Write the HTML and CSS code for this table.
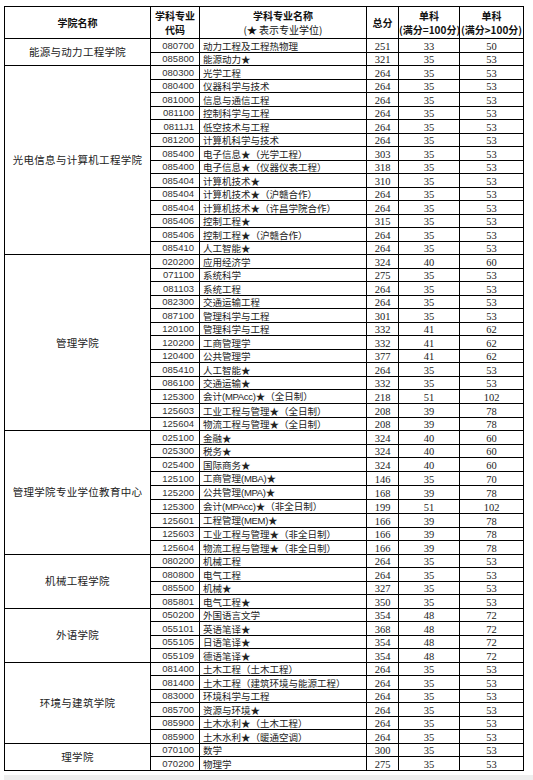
FILE: index.html
```html
<!DOCTYPE html>
<html lang="zh-CN">
<head>
<meta charset="utf-8">
<title>复试分数线</title>
<link rel="stylesheet" href="styles.css">
</head>
<body>
<table class="score-table">
  <colgroup>
    <col class="c-college">
    <col class="c-code">
    <col class="c-name">
    <col class="c-total">
    <col class="c-s1">
    <col class="c-s2">
  </colgroup>
  <thead>
    <tr>
      <th>学院名称</th>
      <th>学科专业<br>代码</th>
      <th>学科专业名称<br><span class="hint">(★ 表示专业学位)</span></th>
      <th>总分</th>
      <th>单科<br>(满分=100分)</th>
      <th>单科<br>(满分&gt;100分)</th>
    </tr>
  </thead>
  <tbody>
    <tr><td class="college" rowspan="2">能源与动力工程学院</td><td class="code">080700</td><td class="name">动力工程及工程热物理</td><td class="num">251</td><td class="num">33</td><td class="num">50</td></tr>
    <tr><td class="code">085800</td><td class="name">能源动力★</td><td class="num">321</td><td class="num">35</td><td class="num">53</td></tr>

    <tr><td class="college" rowspan="14">光电信息与计算机工程学院</td><td class="code">080300</td><td class="name">光学工程</td><td class="num">264</td><td class="num">35</td><td class="num">53</td></tr>
    <tr><td class="code">080400</td><td class="name">仪器科学与技术</td><td class="num">264</td><td class="num">35</td><td class="num">53</td></tr>
    <tr><td class="code">081000</td><td class="name">信息与通信工程</td><td class="num">264</td><td class="num">35</td><td class="num">53</td></tr>
    <tr><td class="code">081100</td><td class="name">控制科学与工程</td><td class="num">264</td><td class="num">35</td><td class="num">53</td></tr>
    <tr><td class="code">0811J1</td><td class="name">低空技术与工程</td><td class="num">264</td><td class="num">35</td><td class="num">53</td></tr>
    <tr><td class="code">081200</td><td class="name">计算机科学与技术</td><td class="num">264</td><td class="num">35</td><td class="num">53</td></tr>
    <tr><td class="code">085400</td><td class="name">电子信息★（光学工程）</td><td class="num">303</td><td class="num">35</td><td class="num">53</td></tr>
    <tr><td class="code">085400</td><td class="name">电子信息★（仪器仪表工程）</td><td class="num">318</td><td class="num">35</td><td class="num">53</td></tr>
    <tr><td class="code">085404</td><td class="name">计算机技术★</td><td class="num">310</td><td class="num">35</td><td class="num">53</td></tr>
    <tr><td class="code">085404</td><td class="name">计算机技术★（沪赣合作）</td><td class="num">264</td><td class="num">35</td><td class="num">53</td></tr>
    <tr><td class="code">085404</td><td class="name">计算机技术★（许昌学院合作）</td><td class="num">264</td><td class="num">35</td><td class="num">53</td></tr>
    <tr><td class="code">085406</td><td class="name">控制工程★</td><td class="num">315</td><td class="num">35</td><td class="num">53</td></tr>
    <tr><td class="code">085406</td><td class="name">控制工程★（沪赣合作）</td><td class="num">264</td><td class="num">35</td><td class="num">53</td></tr>
    <tr><td class="code">085410</td><td class="name">人工智能★</td><td class="num">264</td><td class="num">35</td><td class="num">53</td></tr>

    <tr><td class="college" rowspan="13">管理学院</td><td class="code">020200</td><td class="name">应用经济学</td><td class="num">324</td><td class="num">40</td><td class="num">60</td></tr>
    <tr><td class="code">071100</td><td class="name">系统科学</td><td class="num">275</td><td class="num">35</td><td class="num">53</td></tr>
    <tr><td class="code">081103</td><td class="name">系统工程</td><td class="num">264</td><td class="num">35</td><td class="num">53</td></tr>
    <tr><td class="code">082300</td><td class="name">交通运输工程</td><td class="num">264</td><td class="num">35</td><td class="num">53</td></tr>
    <tr><td class="code">087100</td><td class="name">管理科学与工程</td><td class="num">301</td><td class="num">35</td><td class="num">53</td></tr>
    <tr><td class="code">120100</td><td class="name">管理科学与工程</td><td class="num">332</td><td class="num">41</td><td class="num">62</td></tr>
    <tr><td class="code">120200</td><td class="name">工商管理学</td><td class="num">332</td><td class="num">41</td><td class="num">62</td></tr>
    <tr><td class="code">120400</td><td class="name">公共管理学</td><td class="num">377</td><td class="num">41</td><td class="num">62</td></tr>
    <tr><td class="code">085410</td><td class="name">人工智能★</td><td class="num">264</td><td class="num">35</td><td class="num">53</td></tr>
    <tr><td class="code">086100</td><td class="name">交通运输★</td><td class="num">332</td><td class="num">35</td><td class="num">53</td></tr>
    <tr><td class="code">125300</td><td class="name">会计<span class="latin">(MPAcc)</span>★（全日制）</td><td class="num">218</td><td class="num">51</td><td class="num">102</td></tr>
    <tr><td class="code">125603</td><td class="name">工业工程与管理★（全日制）</td><td class="num">208</td><td class="num">39</td><td class="num">78</td></tr>
    <tr><td class="code">125604</td><td class="name">物流工程与管理★（全日制）</td><td class="num">208</td><td class="num">39</td><td class="num">78</td></tr>

    <tr><td class="college" rowspan="9">管理学院专业学位教育中心</td><td class="code">025100</td><td class="name">金融★</td><td class="num">324</td><td class="num">40</td><td class="num">60</td></tr>
    <tr><td class="code">025300</td><td class="name">税务★</td><td class="num">324</td><td class="num">40</td><td class="num">60</td></tr>
    <tr><td class="code">025400</td><td class="name">国际商务★</td><td class="num">324</td><td class="num">40</td><td class="num">60</td></tr>
    <tr><td class="code">125100</td><td class="name">工商管理<span class="latin">(MBA)</span>★</td><td class="num">146</td><td class="num">35</td><td class="num">70</td></tr>
    <tr><td class="code">125200</td><td class="name">公共管理<span class="latin">(MPA)</span>★</td><td class="num">168</td><td class="num">39</td><td class="num">78</td></tr>
    <tr><td class="code">125300</td><td class="name">会计<span class="latin">(MPAcc)</span>★（非全日制）</td><td class="num">199</td><td class="num">51</td><td class="num">102</td></tr>
    <tr><td class="code">125601</td><td class="name">工程管理<span class="latin">(MEM)</span>★</td><td class="num">166</td><td class="num">39</td><td class="num">78</td></tr>
    <tr><td class="code">125603</td><td class="name">工业工程与管理★（非全日制）</td><td class="num">166</td><td class="num">39</td><td class="num">78</td></tr>
    <tr><td class="code">125604</td><td class="name">物流工程与管理★（非全日制）</td><td class="num">166</td><td class="num">39</td><td class="num">78</td></tr>

    <tr><td class="college" rowspan="4">机械工程学院</td><td class="code">080200</td><td class="name">机械工程</td><td class="num">264</td><td class="num">35</td><td class="num">53</td></tr>
    <tr><td class="code">080800</td><td class="name">电气工程</td><td class="num">264</td><td class="num">35</td><td class="num">53</td></tr>
    <tr><td class="code">085500</td><td class="name">机械★</td><td class="num">327</td><td class="num">35</td><td class="num">53</td></tr>
    <tr><td class="code">085801</td><td class="name">电气工程★</td><td class="num">350</td><td class="num">35</td><td class="num">53</td></tr>

    <tr><td class="college" rowspan="4">外语学院</td><td class="code">050200</td><td class="name">外国语言文学</td><td class="num">354</td><td class="num">48</td><td class="num">72</td></tr>
    <tr><td class="code">055101</td><td class="name">英语笔译★</td><td class="num">368</td><td class="num">48</td><td class="num">72</td></tr>
    <tr><td class="code">055105</td><td class="name">日语笔译★</td><td class="num">354</td><td class="num">48</td><td class="num">72</td></tr>
    <tr><td class="code">055109</td><td class="name">德语笔译★</td><td class="num">354</td><td class="num">48</td><td class="num">72</td></tr>

    <tr><td class="college" rowspan="6">环境与建筑学院</td><td class="code">081400</td><td class="name">土木工程（土木工程）</td><td class="num">264</td><td class="num">35</td><td class="num">53</td></tr>
    <tr><td class="code">081400</td><td class="name">土木工程（建筑环境与能源工程）</td><td class="num">264</td><td class="num">35</td><td class="num">53</td></tr>
    <tr><td class="code">083000</td><td class="name">环境科学与工程</td><td class="num">264</td><td class="num">35</td><td class="num">53</td></tr>
    <tr><td class="code">085700</td><td class="name">资源与环境★</td><td class="num">264</td><td class="num">35</td><td class="num">53</td></tr>
    <tr><td class="code">085900</td><td class="name">土木水利★（土木工程）</td><td class="num">264</td><td class="num">35</td><td class="num">53</td></tr>
    <tr><td class="code">085900</td><td class="name">土木水利★（暖通空调）</td><td class="num">264</td><td class="num">35</td><td class="num">53</td></tr>

    <tr><td class="college" rowspan="2">理学院</td><td class="code">070100</td><td class="name">数学</td><td class="num">300</td><td class="num">35</td><td class="num">53</td></tr>
    <tr><td class="code">070200</td><td class="name">物理学</td><td class="num">275</td><td class="num">35</td><td class="num">53</td></tr>
  </tbody>
</table>
<div class="bottom-bar"></div>
</body>
</html>
```

FILE: styles.css
```css
html, body {
  margin: 0;
  padding: 0;
  background: #ffffff;
}

body {
  padding: 6px 0 0 4px;
  font-family: "Noto Sans CJK SC", "Liberation Sans", sans-serif;
  color: #111;
}

.score-table {
  border-collapse: collapse;
  table-layout: fixed;
  width: 520px;
}

.c-college { width: 146px; }
.c-code { width: 49px; }
.c-name { width: 167px; }
.c-total { width: 32px; }
.c-s1 { width: 61px; }
.c-s2 { width: 64px; }

.score-table th,
.score-table td {
  border: 1px solid #000;
  padding: 0;
  overflow: hidden;
  white-space: nowrap;
}

.score-table thead th {
  height: 31px;
  font-size: 10px;
  line-height: 14px;
  font-weight: bold;
  text-align: center;
  vertical-align: middle;
}

.score-table thead th .hint {
  font-weight: normal;
}

.score-table tbody td {
  height: 12.5px;
  line-height: 12px;
  font-size: 9.5px;
  vertical-align: bottom;
}

.score-table td.college {
  font-size: 10.5px;
  letter-spacing: 0.3px;
  text-align: center;
  vertical-align: middle;
  color: #222;
}

.score-table td.code {
  font-family: "Liberation Sans", Arial, sans-serif;
  font-size: 9.5px;
  text-align: right;
  padding-right: 5px;
  color: #333;
}

.score-table td.name {
  padding-left: 3px;
  color: #222;
}

.name .latin {
  font-family: "Liberation Sans", Arial, sans-serif;
  letter-spacing: -0.3px;
}

.score-table td.num {
  font-family: "Liberation Serif", "Times New Roman", serif;
  font-size: 10.5px;
  text-align: center;
  line-height: 11px;
  color: #222;
}

.bottom-bar {
  margin-top: 4px;
  height: 12px;
  background: #eeeeee;
}
```
